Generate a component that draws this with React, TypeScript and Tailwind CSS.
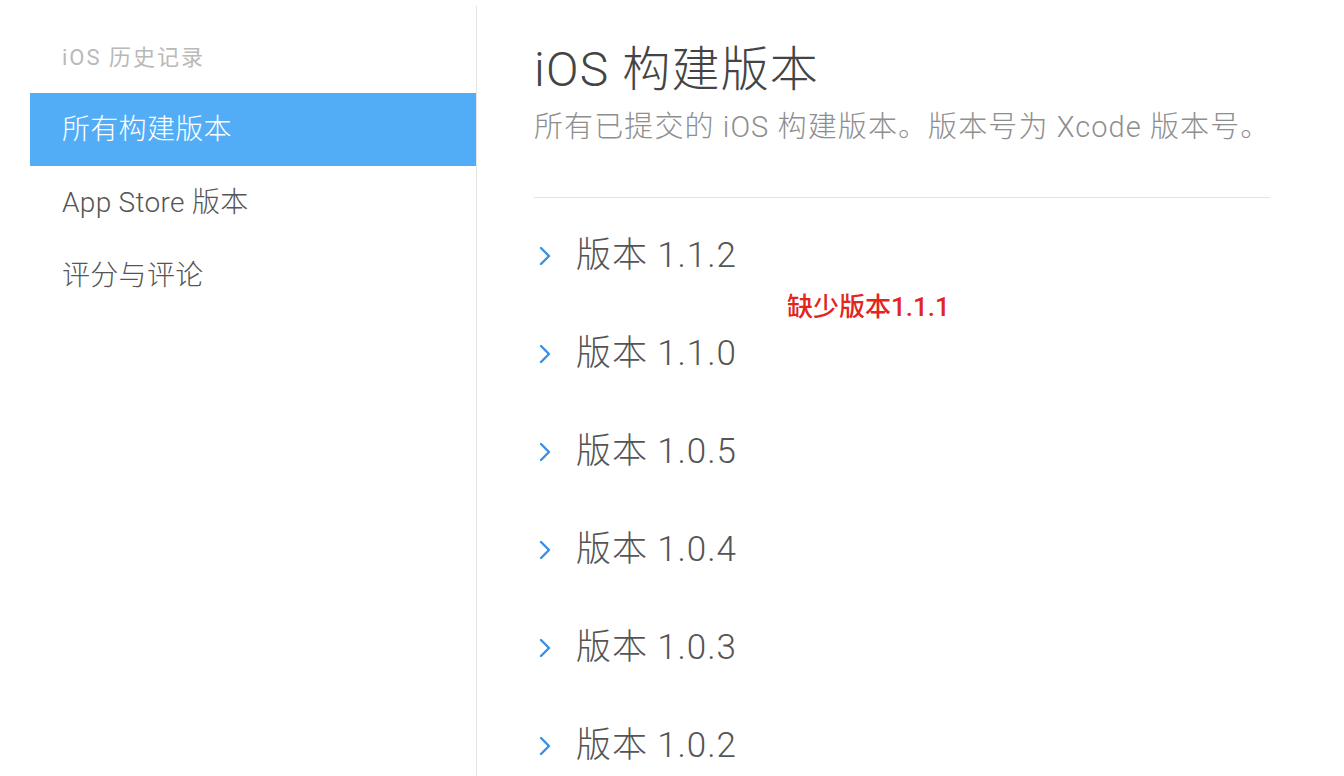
import { useState } from "react";

const latin = "font-['Helvetica_Neue','Roboto','Noto_Sans_CJK_SC',sans-serif]";

const navItems = ["所有构建版本", "App Store 版本", "评分与评论"];
const builds = ["1.1.2", "1.1.0", "1.0.5", "1.0.4", "1.0.3", "1.0.2"];

const Chevron = () => (
  <svg width="12" height="20" viewBox="0 0 12 20" className="shrink-0">
    <polyline
      points="2,2 10,10 2,18"
      fill="none"
      stroke="#3b8fe3"
      strokeWidth="2.4"
      strokeLinecap="round"
      strokeLinejoin="round"
    />
  </svg>
);

export default function App() {
  const [active, setActive] = useState(0);

  return (
    <div className={`flex h-[776px] w-full overflow-hidden bg-white ${latin}`}>
      {/* sidebar */}
      <aside className="ml-[30px] mt-[6px] w-[447px] shrink-0 border-r border-[#e4e4e4]">
        <div className="pl-[32px] pt-[38px] mb-[21px] text-[22px] leading-[28px] tracking-[2px] text-[#b9b9b9]">
          iOS 历史记录
        </div>
        <nav className="flex flex-col">
          {navItems.map((item, i) => (
            <button
              key={item}
              onClick={() => setActive(i)}
              className={`flex h-[73px] items-center pl-[32px] text-left text-[28px] font-light tracking-[0.3px] ${
                active === i ? "bg-[#52adf6] text-white" : "text-[#555]"
              }`}
            >
              {item}
            </button>
          ))}
        </nav>
      </aside>

      {/* content */}
      <main className="min-w-0 flex-1 pl-[57px] pr-[74px]">
        <h1 className="pt-[42px] text-[48px] font-light leading-[56px] tracking-[1.2px] text-[#444]">
          iOS 构建版本
        </h1>
        <p className="mt-[11px] whitespace-nowrap text-[29px] font-light leading-[36px] tracking-[1.1px] text-[#8e8e8e]">
          所有已提交的 iOS 构建版本。版本号为 Xcode 版本号。
        </p>
        <div className="mt-[52px] h-px bg-[#e3e3e3]" />

        <div className="relative pt-[9px]">
          {builds.map((v) => (
            <div key={v} className="flex h-[98px] items-center gap-[25px] pl-[5px]">
              <Chevron />
              <span className="text-[35px] font-light tracking-[0.9px] text-[#555]">版本 {v}</span>
            </div>
          ))}
          <span className="absolute left-[253px] top-[93px] text-[26px] font-medium leading-[32px] text-[#e2261d]">
            缺少版本1.1.1
          </span>
        </div>
      </main>
    </div>
  );
}
